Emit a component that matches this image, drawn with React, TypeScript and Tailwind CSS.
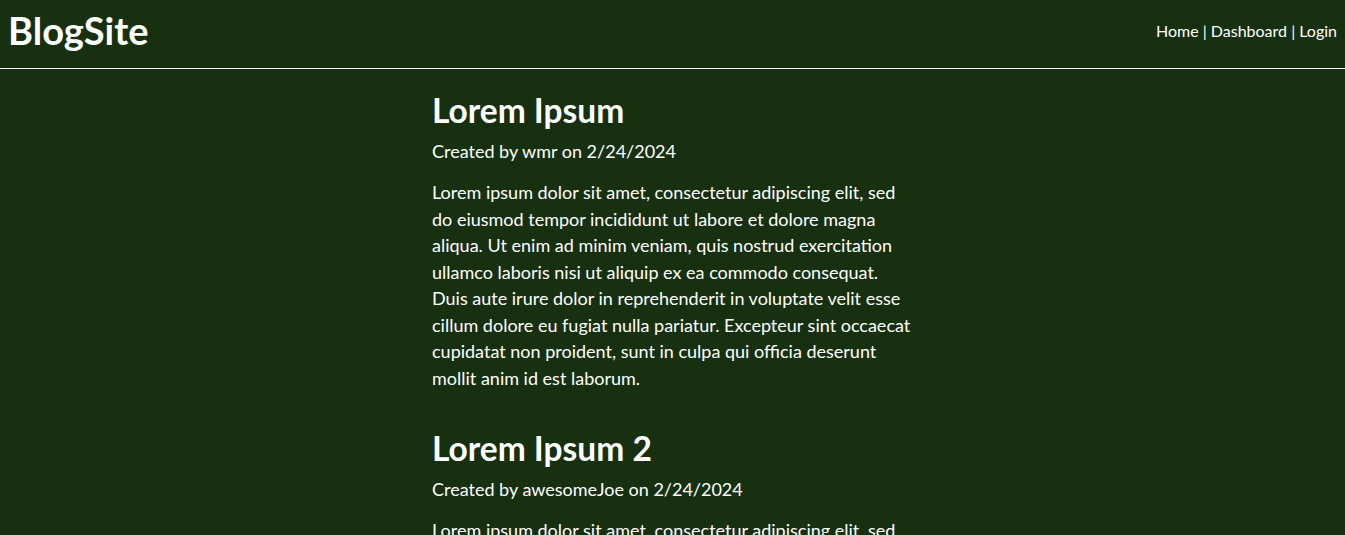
const posts = [
  { title: 'Lorem Ipsum', author: 'wmr', date: '2/24/2024' },
  { title: 'Lorem Ipsum 2', author: 'awesomeJoe', date: '2/24/2024' },
];

const lorem =
  'Lorem ipsum dolor sit amet, consectetur adipiscing elit, sed do eiusmod tempor incididunt ut labore et dolore magna aliqua. Ut enim ad minim veniam, quis nostrud exercitation ullamco laboris nisi ut aliquip ex ea commodo consequat. Duis aute irure dolor in reprehenderit in voluptate velit esse cillum dolore eu fugiat nulla pariatur. Excepteur sint occaecat cupidatat non proident, sunt in culpa qui officia deserunt mollit anim id est laborum.';

export default function App() {
  return (
    <div className="min-h-screen bg-[#163010] text-white font-['Lato','Liberation_Sans',sans-serif]">
      {/* header: title left, nav links right, thin white rule under */}
      <header className="flex h-[69px] items-center justify-between border-b border-white px-2 pb-[8px]">
        <h1 className="text-[38px] font-bold leading-none">BlogSite</h1>
        <nav className="pt-[2px] text-[16px] leading-none">
          <a href="#">Home</a> | <a href="#">Dashboard</a> | <a href="#">Login</a>
        </nav>
      </header>

      <main className="mx-auto w-[481px] pt-[21px]">
        {posts.map((p) => (
          <article key={p.title} className="pb-[37px]">
            <h2 className="text-[33.5px] font-bold leading-[40px]">{p.title}</h2>
            <p className="mt-[8px] text-[18px] leading-[26.5px]">
              Created by {p.author} on {p.date}
            </p>
            <p className="mt-[14.5px] text-[18px] leading-[26.5px]">{lorem}</p>
          </article>
        ))}
      </main>
    </div>
  );
}
